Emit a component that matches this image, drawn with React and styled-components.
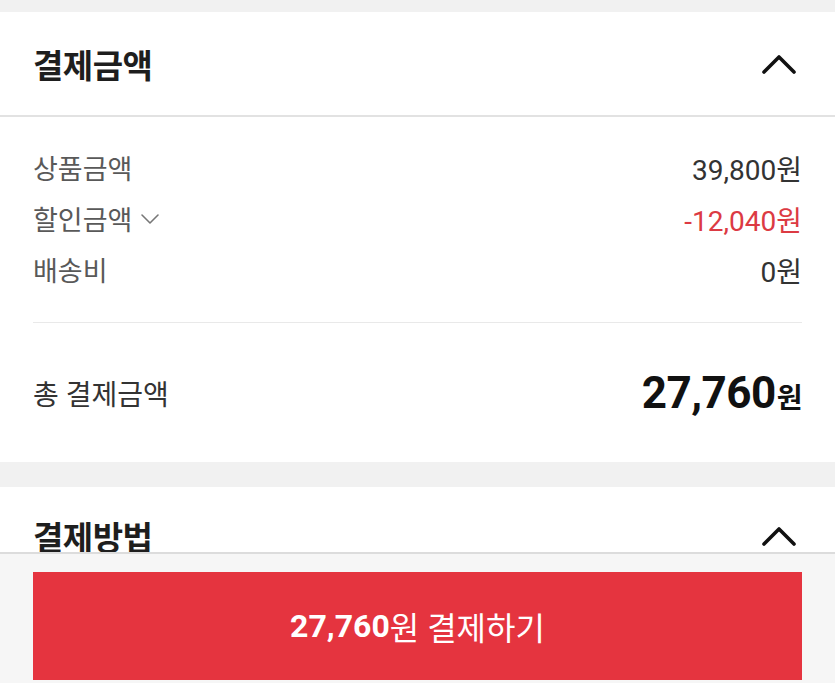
import React from 'react';
import styled, {createGlobalStyle} from 'styled-components';

const GlobalStyle = createGlobalStyle`
    html, body {
        margin: 0;
        padding: 0;
        background: #f1f1f1;
        overflow: hidden;
    }
    body {
        font-family: Roboto, "Noto Sans CJK KR", sans-serif;
        color: #222;
    }
`;

const Styled = {
    Page: styled.div`
        padding-top: 12px;
        display: flex;
        flex-direction: column;
        gap: 25px;
        height: 683px;
        box-sizing: border-box;
    `,
    Card: styled.section`
        background: #fff;
        flex: ${p => (p.grow ? 1 : 'none')};
    `,
    Header: styled.div`
        height: ${p => (p.compact ? '98px' : '105px')};
        padding: 0 38px 0 33px;
        display: flex;
        align-items: center;
        justify-content: space-between;
        border-bottom: ${p => (p.divided ? '2px solid #e2e2e2' : 'none')};
        box-sizing: border-box;
    `,
    Title: styled.h2`
        margin: 0;
        font-size: 33px;
        font-weight: 700;
        color: #1e1e1e;
        letter-spacing: -0.5px;
    `,
    Body: styled.div`
        padding: 25px 33px 0;
    `,
    Rows: styled.div`
        display: flex;
        flex-direction: column;
        padding-bottom: 27px;
        border-bottom: 1px solid #e9e9e9;
    `,
    Row: styled.div`
        height: 51px;
        display: flex;
        align-items: center;
        justify-content: space-between;
        font-size: 27px;
    `,
    Label: styled.span`
        display: flex;
        align-items: center;
        gap: 8px;
        color: #595959;
    `,
    Value: styled.span`
        font-size: 28px;
        color: ${p => (p.discount ? '#dc3a43' : '#333')};
    `,
    Total: styled.div`
        height: 139px;
        display: flex;
        align-items: center;
        justify-content: space-between;
        box-sizing: border-box;
    `,
    TotalLabel: styled.span`
        font-size: 28px;
        color: #333;
    `,
    TotalValue: styled.span`
        font-size: 44px;
        font-weight: 700;
        color: #111;
        letter-spacing: -0.5px;
        small {
            font-size: 28px;
            font-weight: 700;
            margin-left: 1px;
        }
    `,
    BottomBar: styled.div`
        position: fixed;
        left: 0;
        right: 0;
        bottom: 0;
        height: 131px;
        background: #f6f6f6;
        border-top: 2px solid #dcdcdc;
        padding: 18px 33px 3px;
        box-sizing: border-box;
    `,
    PayButton: styled.button`
        width: 100%;
        height: 108px;
        border: none;
        background: #e5343f;
        color: #fff;
        font-family: inherit;
        font-size: 32px;
        display: flex;
        align-items: center;
        justify-content: center;
        b {
            font-weight: 700;
        }
    `
};

const ChevronUp = () => (
    <svg width="36" height="22" viewBox="0 0 36 22">
        <polyline points="3,19 18,4 33,19" fill="none" stroke="#111" strokeWidth="3.6"
            strokeLinecap="round" strokeLinejoin="round" />
    </svg>
);

const ChevronDown = () => (
    <svg width="20" height="12" viewBox="0 0 20 12">
        <polyline points="2,2 10,10 18,2" fill="none" stroke="#777" strokeWidth="1.6"
            strokeLinecap="round" strokeLinejoin="round" />
    </svg>
);

const rows = [
    {label: '상품금액', value: '39,800원'},
    {label: '할인금액', value: '-12,040원', discount: true, toggle: true},
    {label: '배송비', value: '0원'},
];

const App = () => (
    <>
        <GlobalStyle />
        <Styled.Page>
            <Styled.Card>
                <Styled.Header divided>
                    <Styled.Title>결제금액</Styled.Title>
                    <ChevronUp />
                </Styled.Header>
                <Styled.Body>
                    <Styled.Rows>
                        {rows.map(r => (
                            <Styled.Row key={r.label}>
                                <Styled.Label>
                                    {r.label}
                                    {r.toggle && <ChevronDown />}
                                </Styled.Label>
                                <Styled.Value discount={r.discount}>{r.value}</Styled.Value>
                            </Styled.Row>
                        ))}
                    </Styled.Rows>
                    <Styled.Total>
                        <Styled.TotalLabel>총 결제금액</Styled.TotalLabel>
                        <Styled.TotalValue>27,760<small>원</small></Styled.TotalValue>
                    </Styled.Total>
                </Styled.Body>
            </Styled.Card>
            <Styled.Card grow>
                <Styled.Header compact>
                    <Styled.Title>결제방법</Styled.Title>
                    <ChevronUp />
                </Styled.Header>
            </Styled.Card>
        </Styled.Page>
        <Styled.BottomBar>
            <Styled.PayButton>
                <b>27,760</b>원 결제하기
            </Styled.PayButton>
        </Styled.BottomBar>
    </>
);

export default App;
